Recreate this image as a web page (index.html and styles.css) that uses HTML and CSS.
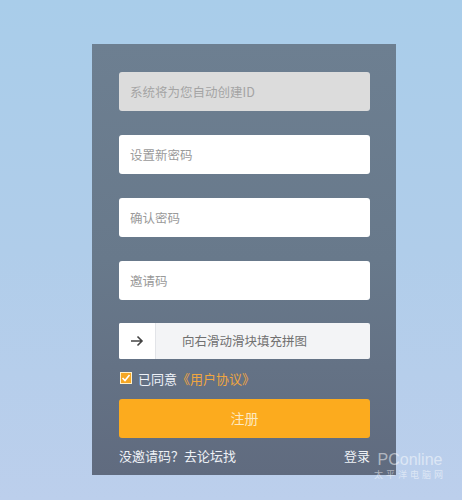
FILE: index.html
```html
<!DOCTYPE html>
<html lang="zh">
<head>
<meta charset="utf-8">
<link rel="stylesheet" href="styles.css">
</head>
<body>
<div class="panel">
  <div class="field disabled">系统将为您自动创建ID</div>
  <div class="field">设置新密码</div>
  <div class="field">确认密码</div>
  <div class="field">邀请码</div>
  <div class="slider">
    <div class="handle">
      <svg width="14" height="12" viewBox="0 0 14 12"><path d="M1 6H12M7.5 1.5L12 6L7.5 10.5" fill="none" stroke="#444" stroke-width="1.6"/></svg>
    </div>
    <div class="track">向右滑动滑块填充拼图</div>
  </div>
  <div class="agree">
    <span class="check"><svg width="10" height="10" viewBox="0 0 10 10"><path d="M1.5 5L4 7.5L8.5 2" fill="none" stroke="#fff" stroke-width="1.6"/></svg></span>
    <span class="agree-text">已同意</span><span class="link">《用户协议》</span>
  </div>
  <div class="btn">注册</div>
  <div class="footer">
    <span>没邀请码？去论坛找</span>
    <span>登录</span>
  </div>
</div>
<div class="watermark">
  <div class="wm-logo">PConline</div>
  <div class="wm-sub">太平洋电脑网</div>
</div>
</body>
</html>
```
FILE: styles.css
```css
html, body {
  margin: 0;
  padding: 0;
}
body {
  width: 462px;
  height: 500px;
  overflow: hidden;
  background: linear-gradient(180deg, #a9cdea 0%, #b0cdea 50%, #bccfec 100%);
  font-family: "Noto Sans CJK SC", "Noto Sans", sans-serif;
  position: relative;
}
.panel {
  margin: 44px 0 0 92px;
  width: 304px;
  height: 431px;
  box-sizing: border-box;
  padding: 28px 26px 0 27px;
  background: linear-gradient(180deg, #6d7f91 0%, #68798b 50%, #606b7f 100%);
  display: flex;
  flex-direction: column;
}
.field {
  height: 39px;
  border-radius: 3px;
  background: #fff;
  color: #9a9a9a;
  font-size: 12.5px;
  line-height: 39px;
  padding-left: 11px;
  margin-bottom: 24px;
}
.field.disabled {
  background: #dcdcdc;
  color: #a4a4a4;
}
.slider {
  height: 36px;
  display: flex;
  background: #f3f4f6;
  margin-top: -1px;
  border-radius: 2px;
  overflow: hidden;
}
.handle {
  width: 36px;
  background: #fff;
  border-right: 1px solid #e2e4e8;
  display: flex;
  align-items: center;
  justify-content: center;
}
.track {
  flex: 1;
  text-align: center;
  line-height: 36px;
  font-size: 12.5px;
  color: #707070;
  padding-right: 37px;
}
.agree {
  display: flex;
  align-items: center;
  height: 16px;
  margin-top: 11px;
  font-size: 13px;
}
.check {
  width: 12px;
  height: 12px;
  background: #f5a623;
  border: 1px solid #fff0c8;
  box-sizing: border-box;
  display: flex;
  align-items: center;
  justify-content: center;
  margin-left: 1px;
  margin-right: 6px;
}
.agree-text {
  color: #eef2f8;
}
.link {
  color: #f0a640;
}
.btn {
  margin-top: 13px;
  height: 39px;
  border-radius: 3px;
  background: #fcab1e;
  color: #fde9c0;
  text-align: center;
  line-height: 39px;
  font-size: 14px;
}
.footer {
  margin-top: 9px;
  display: flex;
  justify-content: space-between;
  color: #eef1f6;
  font-size: 13px;
  line-height: 18px;
}
.watermark {
  position: absolute;
  left: 374px;
  top: 451px;
  color: rgba(255, 255, 255, 0.5);
  text-align: center;
}
.wm-logo {
  font-family: "Liberation Sans", sans-serif;
  font-size: 16px;
  line-height: 17px;
}
.wm-sub {
  margin-top: 2px;
  font-size: 9px;
  line-height: 10px;
  letter-spacing: 3px;
}
```
